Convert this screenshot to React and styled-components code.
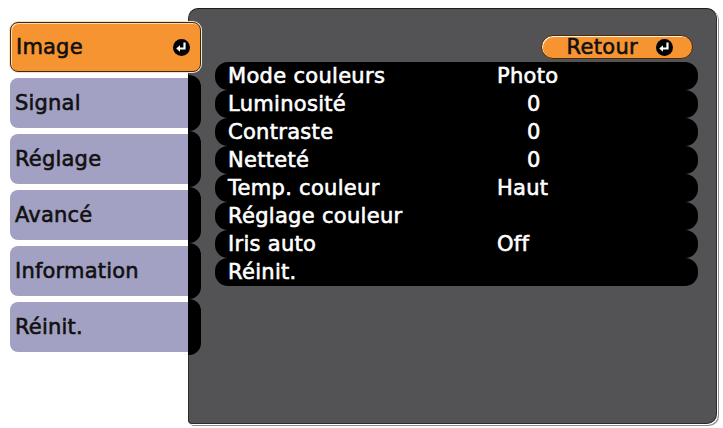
import React from 'react';
import styled, { createGlobalStyle } from 'styled-components';

const GlobalStyle = createGlobalStyle`
  body {
    margin: 0;
    background: #fff;
    font-family: "DejaVu Sans", sans-serif;
  }
`;

const Screen = styled.div`
  display: flex;
  align-items: flex-start;
  padding: 8px 0 0 10px;
  width: 723px;
  height: 428px;
  box-sizing: border-box;
`;

const TabColumn = styled.div`
  display: flex;
  flex-direction: column;
  gap: 6px;
  width: 191px;
  margin-top: 14px;
  margin-right: -13px;
  position: relative;
  z-index: 1;
`;

const TabRow = styled.div`
  display: flex;
  align-items: center;
  height: 50px;
`;

const TabLabel = styled.div`
  flex: 1;
  height: 100%;
  display: flex;
  align-items: center;
  justify-content: space-between;
  box-sizing: border-box;
  padding: 0 10px 0 5px;
  font-size: 21px;
  letter-spacing: 0.2px;
  -webkit-text-stroke: 0.6px currentColor;
  color: #111;
  background: ${p => (p.active ? '#f79432' : '#a3a1c3')};
  border-radius: ${p => (p.active ? '8px' : '8px 0 0 8px')};
  border: ${p => (p.active ? '1px solid #3b2a18' : 'none')};
  box-shadow: ${p => (p.active ? 'inset 1px 1px 0 #ffd8ac, 0 0 0 1px #f4e2c8' : 'none')};
`;

const Connector = styled.div`
  width: 13px;
  height: 56px;
  align-self: center;
  background: #000;
  border-radius: 0 12px 12px 0;
`;

const Panel = styled.div`
  width: 529px;
  height: 416px;
  box-sizing: border-box;
  background: #535355;
  border: 1px solid #2b2b2b;
  border-top-color: #1e1e1e;
  border-radius: 10px 10px 10px 4px;
  box-shadow: 1px 1px 0 #fff, 2px 2px 0 #8d8d8d;
  padding: 26px 18px 0 26px;
  display: flex;
  flex-direction: column;
`;

const BackButton = styled.div`
  align-self: flex-end;
  margin-right: 5px;
  width: 152px;
  height: 24px;
  box-sizing: border-box;
  display: flex;
  align-items: center;
  justify-content: flex-end;
  gap: 18px;
  padding-right: 19px;
  background: #f79432;
  border: 1px solid #4a2a0e;
  border-radius: 12px;
  box-shadow: inset 1px 1px 0 #fff1dc;
  font-size: 21px;
  letter-spacing: 0.3px;
  -webkit-text-stroke: 0.6px currentColor;
  color: #111;
`;

const MenuList = styled.div`
  display: flex;
  flex-direction: column;
  margin-top: 3px;
`;

const MenuRow = styled.div`
  display: grid;
  grid-template-columns: 269px 1fr;
  align-items: center;
  height: 28px;
  padding-left: 13px;
  background: #000;
  border-radius: 13px;
  color: #fff;
  font-size: 21px;
  letter-spacing: 0.3px;
  -webkit-text-stroke: 0.6px currentColor;
  line-height: 1;
`;

const Value = styled.span`
  padding-left: ${p => (p.num ? '30px' : '0')};
`;

const EnterIcon = () => (
  <svg width="17" height="17" viewBox="0 0 17 17">
    <circle cx="8.5" cy="8.5" r="8.5" fill="#000" />
    <path d="M11.5 3.5 V9.5 H6.5" fill="none" stroke="#fff" strokeWidth="2.2" />
    <path d="M3.2 9.5 L7 6.2 V12.8 Z" fill="#fff" />
  </svg>
);

const tabs = ['Image', 'Signal', 'Réglage', 'Avancé', 'Information', 'Réinit.'];

const items = [
  ['Mode couleurs', 'Photo'],
  ['Luminosité', '0', true],
  ['Contraste', '0', true],
  ['Netteté', '0', true],
  ['Temp. couleur', 'Haut'],
  ['Réglage couleur', ''],
  ['Iris auto', 'Off'],
  ['Réinit.', ''],
];

export default function App() {
  return (
    <>
      <GlobalStyle />
      <Screen>
        <TabColumn>
          {tabs.map((t, i) => (
            <TabRow key={t}>
              <TabLabel active={i === 0}>
                {t}
                {i === 0 && <EnterIcon />}
              </TabLabel>
              {i !== 0 && <Connector />}
            </TabRow>
          ))}
        </TabColumn>
        <Panel>
          <BackButton>
            Retour
            <EnterIcon />
          </BackButton>
          <MenuList>
            {items.map(([label, value, num]) => (
              <MenuRow key={label}>
                <span>{label}</span>
                <Value num={num}>{value}</Value>
              </MenuRow>
            ))}
          </MenuList>
        </Panel>
      </Screen>
    </>
  );
}
